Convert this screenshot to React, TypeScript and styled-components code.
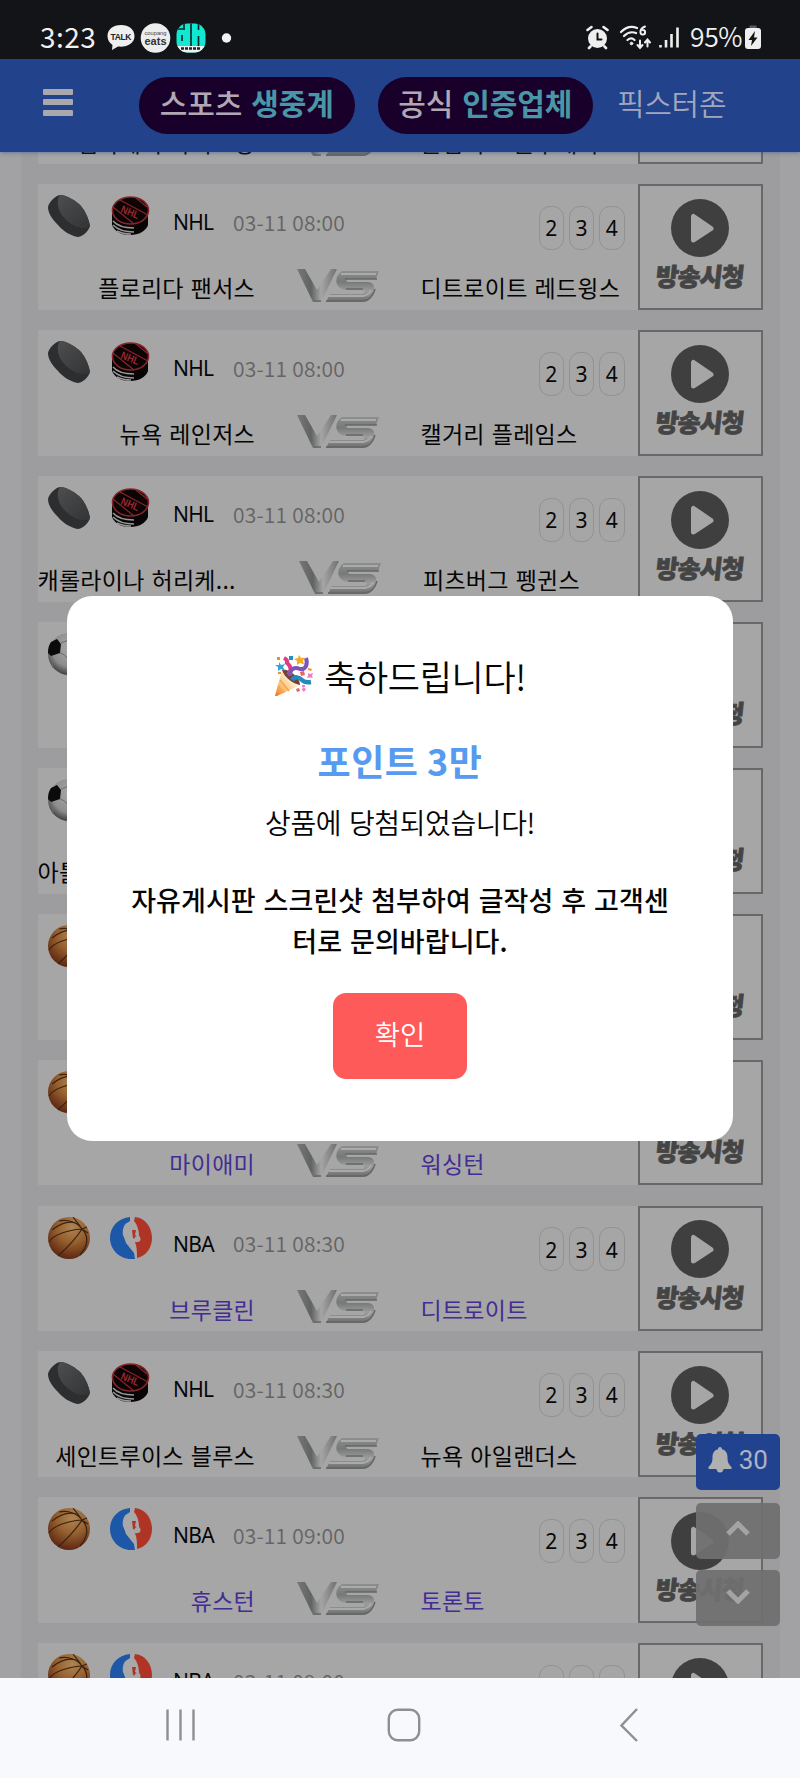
import React from "react";
import styled, { createGlobalStyle } from "styled-components";

const Global = createGlobalStyle`
  * { box-sizing: border-box; }
  body { margin: 0; background: #f7f9fc; }
  svg { display: block; flex: none; }
  button { border: 0; padding: 0; font: inherit; }
`;

const Screen = styled.div`
  width: 800px;
  height: 1778px;
  display: flex;
  flex-direction: column;
  overflow: hidden;
  font-family: "Noto Sans CJK KR", "Noto Sans", sans-serif;
`;

const StatusBar = styled.div`
  height: 59px;
  flex: none;
  background: #121417;
  display: flex;
  align-items: center;
  justify-content: space-between;
  padding: 16px 39px 0 40px;
  color: #f0f0f0;
`;
const StatusGroup = styled.div`
  display: flex;
  align-items: center;
`;
const Clock = styled.span`
  font: 400 28px/30px "Noto Sans CJK KR", sans-serif;
  width: 67px;
  height: 33px;
  letter-spacing: 0.5px;
`;
const Battery = styled.span`
  font: 350 26.5px/30px "Noto Sans CJK KR", sans-serif;
  width: 55px;
  height: 33px;
  letter-spacing: -0.4px;
`;

const Browser = styled.div`
  position: relative;
  height: 1618.5px;
  flex: none;
  display: flex;
  flex-direction: column;
  overflow: hidden;
  background: #a2a2a5;
`;

const Header = styled.header`
  height: 93px;
  flex: none;
  display: flex;
  align-items: center;
  background: #23428c;
  padding: 0 43px;
  z-index: 1;
  box-shadow: 0 1px 4px rgba(35, 66, 140, 0.45);
`;
const MenuButton = styled.div`
  width: 30px;
  height: 27px;
  margin: -7px 66px 0 0;
  display: flex;
  flex-direction: column;
  justify-content: space-between;
`;
const MenuLine = styled.i`
  height: 6px;
  border-radius: 1px;
  background: #a8a8ae;
`;
const Pill = styled.div`
  width: 215.5px;
  height: 57px;
  border-radius: 29px;
  background: #19002b;
  margin-right: 23px;
  padding-bottom: 7px;
  display: flex;
  align-items: center;
  justify-content: center;
  gap: 9px;
  font-size: 30px;
  line-height: 40px;
  font-weight: 500;
  white-space: nowrap;
`;
const PillLead = styled.span`
  color: #b2a8b4;
  letter-spacing: -0.1px;
`;
const PillAccent = styled.span`
  color: #4896a6;
  font-weight: 700;
  letter-spacing: -0.1px;
`;
const HeaderLink = styled.span`
  color: #a2a7bd;
  font-size: 30px;
  font-weight: 350;
  letter-spacing: -0.3px;
  padding: 0 0 8px 1px;
`;

const Board = styled.main`
  flex: 1;
  min-height: 0;
  margin: 0 20px 0 21px;
  padding: 0 17.5px 0 16.5px;
  background: #9d9d9f;
`;
const MatchList = styled.div`
  display: flex;
  flex-direction: column;
  gap: 20.1px;
  margin-top: -113.6px;
`;
const Card = styled.article`
  display: flex;
  height: 125.8px;
  flex: none;
  background: #a6a6a6;
`;
const CardMain = styled.div`
  flex: 1;
  min-width: 0;
  display: flex;
  flex-direction: column;
`;
const CardTop = styled.div`
  height: 80px;
  display: flex;
  padding: 11px 13px 0 10.5px;
`;
const SportSlot = styled.div`
  width: 62px;
`;
const LeagueSlot = styled.div`
  width: 63px;
`;
const League = styled.span`
  width: 60px;
  padding-top: 12px;
  font: 400 21px/30px "Noto Sans", sans-serif;
  letter-spacing: -0.7px;
  color: #060606;
`;
const Kickoff = styled.time`
  padding-top: 11.5px;
  font: 350 21px/30px "Noto Sans CJK KR", sans-serif;
  letter-spacing: 0.2px;
  color: #646464;
  white-space: nowrap;
`;
const Channels = styled.div`
  display: flex;
  gap: 5px;
  margin: 10.5px 0 0 auto;
`;
const Channel = styled.span`
  width: 25.3px;
  height: 44px;
  border: 1.5px solid #929292;
  border-radius: 11px;
  display: flex;
  align-items: center;
  justify-content: center;
  padding-top: 1px;
  font: 400 21px/30px "Noto Sans", sans-serif;
  color: #080808;
`;
const Teams = styled.div`
  display: flex;
  align-items: center;
  height: 50px;
  font-size: 23px;
  line-height: 34px;
  font-weight: 400;
  letter-spacing: 0.25px;
  word-spacing: 1.6px;
`;
const Home = styled.span<{ $linked?: boolean; $clipped?: boolean }>`
  width: ${(p) => (p.$clipped ? 220 : 217.5)}px;
  flex: none;
  padding-top: 3px;
  text-align: ${(p) => (p.$clipped ? "left" : "right")};
  color: ${(p) => (p.$linked ? "#432d94" : "#050505")};
  white-space: nowrap;
`;
const Versus = styled.div`
  width: 165.5px;
  padding-left: 41.5px;
  flex: none;
`;
const Away = styled.span<{ $linked?: boolean }>`
  padding-top: 3px;
  color: ${(p) => (p.$linked ? "#432d94" : "#050505")};
  white-space: nowrap;
`;
const Watch = styled.button`
  width: 125px;
  height: 125.8px;
  flex: none;
  border: 2px solid #686868;
  background: #a6a6a6;
  display: flex;
  flex-direction: column;
  align-items: center;
  padding-top: 12.5px;
`;
const WatchLabel = styled.span`
  margin-top: 1px;
  font-size: 25px;
  line-height: 34px;
  font-weight: 900;
  letter-spacing: -1.1px;
  color: #444;
  -webkit-text-stroke: 0.8px #444;
  transform: skewX(-6deg);
  white-space: nowrap;
`;

const FloatStack = styled.div`
  position: absolute;
  right: 20.5px;
  bottom: 51.5px;
  display: flex;
  flex-direction: column;
  gap: 11px;
`;
const FloatButton = styled.button<{ $primary?: boolean }>`
  width: 83.5px;
  height: 56px;
  border-radius: 5px;
  margin-bottom: ${(p) => (p.$primary ? "2px" : "0")};
  background: ${(p) => (p.$primary ? "#21428f" : "rgba(112,112,112,.94)")};
  color: #adb2c4;
  display: flex;
  align-items: center;
  justify-content: center;
  gap: 7px;
  font: 400 26px/30px Roboto, sans-serif;
  padding-bottom: 4px;
`;

const Overlay = styled.div`
  position: absolute;
  inset: 0;
  z-index: 2;
  display: flex;
  align-items: center;
  justify-content: center;
`;
const Dialog = styled.section`
  width: 666.5px;
  height: 545.5px;
  border-radius: 25px;
  background: #fff;
  padding-top: 48.5px;
  display: flex;
  flex-direction: column;
  align-items: center;
  color: #050505;
  text-align: center;
  white-space: nowrap;
`;
const Title = styled.h2`
  margin: 0;
  height: 64px;
  display: flex;
  align-items: center;
  gap: 10px;
  font-size: 35px;
  font-weight: 350;
  line-height: 64px;
  letter-spacing: -0.35px;
`;
const Prize = styled.strong`
  margin-top: 28.5px;
  font-size: 36px;
  line-height: 46px;
  font-weight: 600;
  letter-spacing: 0.5px;
  color: #579bf0;
`;
const Result = styled.p`
  margin: 21px 0 0;
  font-size: 28px;
  line-height: 36px;
  font-weight: 350;
  letter-spacing: -0.4px;
  word-spacing: 2px;
`;
const Guide = styled.p`
  margin: 39px 0 0;
  font-size: 27px;
  line-height: 41px;
  font-weight: 450;
  letter-spacing: 0.08px;
  word-spacing: 1.7px;
`;
const Confirm = styled.button`
  margin-top: 32px;
  width: 134px;
  height: 86px;
  border-radius: 13px;
  background: #ff5a5a;
  color: #fff;
  font-size: 27.5px;
  font-weight: 350;
  padding-bottom: 6px;
`;

const NavBar = styled.nav`
  flex: 1;
  background: #f7f9fc;
  display: flex;
  align-items: center;
  padding: 0 162px 6px 164px;
`;
const NavItem = styled.span<{ $gap?: number }>`
  margin-right: ${(p) => p.$gap ?? 0}px;
`;

type Sport = "puck" | "soccer" | "basketball";

const SportIcon = ({ kind }: { kind: Sport }) => {
  if (kind === "puck")
    return (
      <svg width="42" height="42" viewBox="0 0 42 42">
        <defs>
          <linearGradient id="pk" x1="0" y1="0" x2="1" y2="1">
            <stop offset="0" stopColor="#4c4e50" />
            <stop offset="1" stopColor="#333435" />
          </linearGradient>
        </defs>
        <path d="M0 12C1 7 7 1 12 0c7 0 16 6 21 11 5 6 8 14 9 20-1 4-6 10-12 11-7-1-15-6-20-12C4 24 0 18 0 12Z" fill="#2d2e2f" />
        <path d="M12 0c7 0 16 6 21 11 5 6 8 14 9 20-3 3-9 2-13 1-7-3-14-9-17-15-2-4-4-12 0-17Z" fill="url(#pk)" />
      </svg>
    );
  if (kind === "soccer")
    return (
      <svg width="42" height="42" viewBox="0 0 42 42">
        <defs>
          <radialGradient id="sc" cx=".55" cy=".35" r=".65">
            <stop offset="0" stopColor="#aaa" />
            <stop offset=".7" stopColor="#8d8d8d" />
            <stop offset="1" stopColor="#444" />
          </radialGradient>
        </defs>
        <circle cx="21" cy="21" r="21" fill="url(#sc)" />
        <path d="M3 9 9 6l4 5-1 9-9 3-3-3Q0 13 3 9Z" fill="#0b0b0b" />
        <path d="M12 20q5 1 7 5M3 23l2 12M13 10l10-4" fill="none" stroke="#6d6d6d" strokeWidth="1" />
        <path d="m22 26 8-3 5 7-5 7-8-3ZM24 3l9 3 3 7-7 2-6-6Z" fill="#111" />
      </svg>
    );
  return (
    <svg width="42" height="42" viewBox="0 0 42 42">
      <defs>
        <radialGradient id="bb" cx=".58" cy=".25" r=".8">
          <stop offset="0" stopColor="#ad8553" />
          <stop offset=".45" stopColor="#96602f" />
          <stop offset="1" stopColor="#56200f" />
        </radialGradient>
      </defs>
      <circle cx="21" cy="21" r="21" fill="url(#bb)" />
      <path
        d="M1 25C5 18 19 13 34 12L40 16M11 4c10-2 19 2 23 8M25 0c3 4 6 7 9 12C42 20 39 30 32 38M10 39C21 29 29 20 34 12M34 12 39 10M4 13C14 5 22 4 28 6"
        fill="none"
        stroke="#3a2110"
        strokeWidth="1.2"
      />
    </svg>
  );
};

const NhlIcon = () => (
  <svg width="42" height="42" viewBox="0 0 42 42">
    <path d="M2 17v13c3 7 10 10 18 10 9 0 16-4 18-10V16Z" fill="#080506" />
    <path d="M3 26q6 7 21 7M3 30q7 7 21 7M7 36q6 3 14 3" fill="none" stroke="#999" strokeWidth="1.5" />
    <ellipse cx="20.500" cy="15.500" rx="18" ry="13.500" fill="#0c0405" stroke="#86252c" strokeWidth="1.600" />
    <path d="M3 12 24 29M10 5 38 20M26 3l11 9" stroke="#86252c" strokeWidth="1.200" />
    <text x="10" y="17" transform="rotate(22 10 17)" fontFamily="Liberation Sans" fontWeight="700" fontSize="10.500" fill="#98272f" textLength="19" lengthAdjust="spacingAndGlyphs">
      NHL
    </text>
  </svg>
);

const NbaIcon = () => (
  <svg width="43" height="42" viewBox="0 0 43 42">
    <path d="M20 0C8 1 0 10 0 21s9 21 21 21h5c1-5-1-9-4-12l-6-6-3-6c-1-5 1-11 4-12l3-2Z" fill="#1d57a8" />
    <path d="M20 1v4l-4 3-3 9 3 9 8 10 1 6h2V31l-2-8 5-5-2-8-4-4 1-5Z" fill="#a8a8a8" />
    <path d="M25 0c11 1 17 11 17 21S36 39 27 41c0-6 0-11-2-16 4 1 6-3 4-6 0-6-2-12-5-15Z" fill="#b03426" />
    <path d="m22 13 4 0-1 5 3 2-1 3-4-2Z" fill="#b03426" />
    <circle cx="27.500" cy="22" r="3" fill="#a6a6a6" />
  </svg>
);

const VsMark = () => (
  <svg width="83" height="34" viewBox="0 0 83 34">
    <defs>
      <linearGradient id="vs" x1="0" y1="0" x2="0" y2="1">
        <stop offset="0" stopColor="#8d8f8f" />
        <stop offset=".35" stopColor="#777978" />
        <stop offset=".65" stopColor="#9b9c9b" />
        <stop offset="1" stopColor="#696b6a" />
      </linearGradient>
      <linearGradient id="vsv" x1="0" y1="0" x2="1" y2="0">
        <stop offset="0" stopColor="#777978" />
        <stop offset=".35" stopColor="#606362" />
        <stop offset=".6" stopColor="#a4a5a4" />
        <stop offset="1" stopColor="#6f7170" />
      </linearGradient>
    </defs>
    <path d="M0 0h8l12 21L34 0h6L24 33h-8Z" fill="url(#vsv)" />
    <path d="M45 2h37l-3 8H52c-3 0-4 2-1 3h20c7 1 7 5 5 12-2 5-5 8-11 8H29l4-8h33c2 0 2-4 0-4H49c-11-1-13-13-4-19Z" fill="url(#vs)" />
    <path d="M44 5h35M32 27h34q6-1 8-6" fill="none" stroke="#a9aaa9" strokeWidth="2" />
    <path d="M29 32h37q9-1 12-12M48 10h32M17 32h7M49 20h17" fill="none" stroke="#666867" strokeWidth="1.500" />
  </svg>
);

const PlayIcon = () => (
  <svg width="58" height="58" viewBox="0 0 58 58">
    <circle cx="29" cy="29" r="29" fill="#3f3f3f" />
    <path d="M22.500 17.500v23.500l17.500-11.500Z" fill="#a6a6a6" stroke="#a6a6a6" strokeWidth="5" strokeLinejoin="round" />
  </svg>
);

interface Match {
  sport: Sport;
  league?: "NHL" | "NBA";
  time?: string;
  home?: string;
  away?: string;
  clipped?: boolean;
  covered?: boolean;
}

const matches: Match[] = [
  { sport: "puck", home: "탬파베이 라이트닝", away: "콜럼버스 블루재키츠" },
  { sport: "puck", league: "NHL", time: "03-11 08:00", home: "플로리다 팬서스", away: "디트로이트 레드윙스" },
  { sport: "puck", league: "NHL", time: "03-11 08:00", home: "뉴욕 레인저스", away: "캘거리 플레임스" },
  { sport: "puck", league: "NHL", time: "03-11 08:00", home: "캐롤라이나 허리케...", away: "피츠버그 펭귄스", clipped: true },
  { sport: "soccer", covered: true },
  { sport: "soccer", home: "아틀", clipped: true, covered: true },
  { sport: "basketball", covered: true },
  { sport: "basketball", home: "마이애미", away: "워싱턴" },
  { sport: "basketball", league: "NBA", time: "03-11 08:30", home: "브루클린", away: "디트로이트" },
  { sport: "puck", league: "NHL", time: "03-11 08:30", home: "세인트루이스 블루스", away: "뉴욕 아일랜더스" },
  { sport: "basketball", league: "NBA", time: "03-11 09:00", home: "휴스턴", away: "토론토" },
  { sport: "basketball", league: "NBA", time: "03-11 09:00" },
];

const MatchCard = ({ match }: { match: Match }) => {
  const linked = match.sport === "basketball";
  return (
    <Card>
      <CardMain>
        <CardTop>
          <SportSlot>
            <SportIcon kind={match.sport} />
          </SportSlot>
          {match.league && (
            <>
              <LeagueSlot>{match.league === "NHL" ? <NhlIcon /> : <NbaIcon />}</LeagueSlot>
              <League>{match.league}</League>
              <Kickoff>{match.time}</Kickoff>
              <Channels>
                {[2, 3, 4].map((n) => (
                  <Channel key={n}>{n}</Channel>
                ))}
              </Channels>
            </>
          )}
        </CardTop>
        <Teams>
          <Home $linked={linked} $clipped={match.clipped}>
            {match.home}
          </Home>
          {!match.covered && (
            <>
              <Versus>
                <VsMark />
              </Versus>
              <Away $linked={linked}>{match.away}</Away>
            </>
          )}
        </Teams>
      </CardMain>
      <Watch>
        <PlayIcon />
        <WatchLabel>방송시청</WatchLabel>
      </Watch>
    </Card>
  );
};

const NotificationIcons = () => (
  <svg width="128" height="30" viewBox="0 0 128 30">
    <path d="M14 2C6 2 .5 6.500.5 13c0 4 2 7 5 9l-.5 5 6-3.500c9 1 16.500-3 16.500-10.500C27.500 6.500 22 2 14 2Z" fill="#efefef" />
    <text x="3.500" y="16.500" fontFamily="Liberation Sans" fontSize="8.500" fontWeight="700" fill="#222" textLength="21">TALK</text>
    <circle cx="48.500" cy="15" r="14.800" fill="#ededed" />
    <text x="37.500" y="12" fontFamily="Liberation Sans" fontSize="5" fill="#444" textLength="22" lengthAdjust="spacingAndGlyphs">coupang</text>
    <text x="37.500" y="22" fontFamily="Liberation Sans" fontSize="11" fontWeight="700" fill="#333" textLength="22" lengthAdjust="spacingAndGlyphs">eats</text>
    <clipPath id="dh"><rect x="69.500" y=".5" width="29" height="29" rx="11" /></clipPath>
    <g clipPath="url(#dh)">
      <path d="M69 0h30v30H69Z" fill="#10e8d1" />
      <path d="M69 23h30v7H69Z" fill="#eee" />
      <path d="M69 6h7M77 0v7M84 0v23M91.500 0v7M75 12v6M91.500 13v10" stroke="#0b2a2b" strokeWidth="1.700" />
      <path d="M74 25.500h20" stroke="#222" strokeWidth="2.500" strokeDasharray="3 1" />
    </g>
    <circle cx="119.500" cy="15" r="4.700" fill="#f2f2f2" />
  </svg>
);

const SystemIcons = () => (
  <svg width="104" height="26" viewBox="0 0 104 26">
    <g fill="none" stroke="#efefef" strokeLinecap="round">
      <circle cx="11.500" cy="13.500" r="9.500" fill="#efefef" stroke="none" />
      <path d="M11.500 8.500v6h4" stroke="#121417" strokeWidth="2" />
      <path d="m1.500 5 4-3M21.500 5l-4-3M4.500 21.500l-1.500 1.500M18.500 21.500l1.500 1.500" strokeWidth="2.600" />
      <path d="M35 7C40 2 46 1 51 3M38 11c3.500-3.500 8-4.500 12-3M41.500 15c2.500-2 5-2 7 0" strokeWidth="2.200" />
      <circle cx="45.500" cy="18.500" r="1.300" fill="#efefef" strokeWidth="1" />
      <path d="M59 1.500q-5 2-4.500 6a2.300 2.300 0 1 0 2.300-2.500" strokeWidth="2" />
      <path d="M54 15.500v7m-2.500-2.500L54 23l2.500-3M61.500 21.500v-6M59 17.500l2.500-3 2.500 3" strokeWidth="2" />
      <path d="M74.500 20v2.500M80 15v7.500M85.500 9v13.500M91.500 2.500v20" strokeWidth="2.600" strokeLinecap="butt" />
    </g>
  </svg>
);

const BatteryIcon = () => (
  <svg width="16" height="26" viewBox="0 0 16 26">
    <path d="M4.500.5h7v3h-7z" fill="#5a5c5e" />
    <rect y="3" width="16" height="21" rx="3" fill="#efefef" />
    <path d="M10 6 3.500 15H7l-1 6 6.500-8.500H9Z" fill="#121417" />
  </svg>
);

const PartyPopper = () => (
  <svg width="40" height="42" viewBox="0 0 40 42">
    <defs>
      <linearGradient id="cone" x1="0" y1="1" x2="1" y2="0">
        <stop offset="0" stopColor="#ef6c16" />
        <stop offset=".3" stopColor="#f8bd71" />
        <stop offset=".65" stopColor="#fff0d2" />
        <stop offset="1" stopColor="#f5a73b" />
      </linearGradient>
    </defs>
    <path d="M1 41 8 15c4 6 10 12 18 15L3 41Z" fill="url(#cone)" />
    <path d="m6 25 9 11M4 31l6 7" stroke="#f5a552" strokeWidth="1.500" />
    <path d="M8 15c6-2 18 7 18 15-7-1-16-8-18-15Z" fill="#744039" />
    <path d="M14 20c4-5 3-9-1-12 1-3-1-4-3-5" fill="none" stroke="#dd3e7c" strokeWidth="4" />
    <path d="M16 21c0-8 5-9 10-7 6 1 8-5 6-11" fill="none" stroke="#7e54b9" strokeWidth="4" />
    <path d="M18 25c3-4 7-3 10 0q3 3 9 2" fill="none" stroke="#2689bd" strokeWidth="4.500" />
    <path d="m25 0 2 3 4-.5-2 3 1 4-4-1.500-3 2V6l-3-2 4-1Z" fill="#f4ac20" />
    <path d="m5 7 2 3 4-1-2 3 2 4-4-2-3 2v-4l-3-2h4Z" fill="#2da5dc" />
    <path d="M15 1h4v4h-4z" fill="#1f8fd3" />
    <path d="M3 2h3v3H3zM34 13l4 1-1 2-3-1ZM4 17h3v2H4z" fill="#f08b36" />
    <path d="m26 17 4-1 1 4-4 1ZM22 34l3-1 1 3-3 1Z" fill="#ec625f" />
    <path d="m34 18 2 1 3-1-1 3 1 2-3-.5-3 .5 1-2ZM29 32l3 2-2 3-2-2ZM28 30h3v2h-3z" fill="#f17cc5" />
  </svg>
);

export default function App() {
  return (
    <Screen>
      <Global />
      <StatusBar>
        <StatusGroup>
          <Clock>3:23</Clock>
          <NotificationIcons />
        </StatusGroup>
        <StatusGroup>
          <SystemIcons />
          <Battery>95%</Battery>
          <BatteryIcon />
        </StatusGroup>
      </StatusBar>
      <Browser>
        <Header>
          <MenuButton>
            <MenuLine />
            <MenuLine />
            <MenuLine />
          </MenuButton>
          <Pill>
            <PillLead>스포츠</PillLead>
            <PillAccent>생중계</PillAccent>
          </Pill>
          <Pill>
            <PillLead>공식</PillLead>
            <PillAccent>인증업체</PillAccent>
          </Pill>
          <HeaderLink>픽스터존</HeaderLink>
        </Header>
        <Board>
          <MatchList>
            {matches.map((m, i) => (
              <MatchCard key={i} match={m} />
            ))}
          </MatchList>
        </Board>
        <FloatStack>
          <FloatButton $primary>
            <svg width="24" height="26" viewBox="0 0 24 26">
              <path d="M12 0c1.500 0 2 1 2 2.300 4 1 5.500 4 5.500 8 0 6 1.500 7 4 9.700V22H.5v-2C3 17.300 4.500 16.300 4.500 10.300c0-4 1.500-7 5.500-8C10 1 10.500 0 12 0Z" fill="#b0b0b0" />
              <path d="M8.500 22h7q-.5 3.500-3.500 3.500T8.500 22Z" fill="#b0b0b0" />
            </svg>
            30
          </FloatButton>
          <FloatButton>
            <svg width="24" height="16" viewBox="0 0 24 16">
              <path d="m2 13 10-10 10 10" fill="none" stroke="#a4a4a4" strokeWidth="5" />
            </svg>
          </FloatButton>
          <FloatButton>
            <svg width="24" height="16" viewBox="0 0 24 16">
              <path d="m2 3 10 10L22 3" fill="none" stroke="#a4a4a4" strokeWidth="5" />
            </svg>
          </FloatButton>
        </FloatStack>
        <Overlay>
          <Dialog>
            <Title>
              <PartyPopper />
              축하드립니다!
            </Title>
            <Prize>포인트 3만</Prize>
            <Result>상품에 당첨되었습니다!</Result>
            <Guide>
              자유게시판 스크린샷 첨부하여 글작성 후 고객센
              <br />
              터로 문의바랍니다.
            </Guide>
            <Confirm>확인</Confirm>
          </Dialog>
        </Overlay>
      </Browser>
      <NavBar>
        <NavItem $gap={189}>
          <svg width="34" height="34" viewBox="0 0 34 34">
            <path d="M3.500 1.500v31M16.500 1.500v31M29.500 1.500v31" stroke="#8d8f91" strokeWidth="2.400" />
          </svg>
        </NavItem>
        <NavItem $gap={198.5}>
          <svg width="34" height="34" viewBox="0 0 34 34">
            <rect x="1.800" y="1.800" width="30.400" height="30.400" rx="9" fill="none" stroke="#8d8f91" strokeWidth="2.400" />
          </svg>
        </NavItem>
        <NavItem>
          <svg width="18" height="34" viewBox="0 0 18 34">
            <path d="M17 1 1.500 17.500 17 33" fill="none" stroke="#8d8f91" strokeWidth="2.400" />
          </svg>
        </NavItem>
      </NavBar>
    </Screen>
  );
}
